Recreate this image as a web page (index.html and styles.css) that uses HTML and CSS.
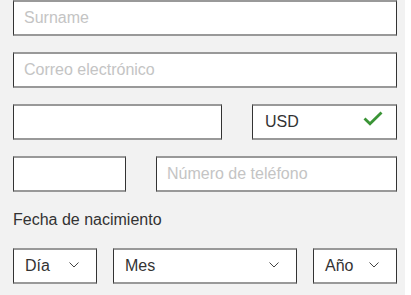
FILE: index.html
```html
<!DOCTYPE html>
<html lang="es">
<head>
<meta charset="utf-8">
<link rel="stylesheet" href="styles.css">
</head>
<body>
<div class="form">
  <div class="row"><div class="field full"><span class="ph">Surname</span></div></div>
  <div class="row"><div class="field full"><span class="ph">Correo electrónico</span></div></div>
  <div class="row gap30">
    <div class="field w209"></div>
    <div class="field grow between"><span class="val">USD</span>
      <svg class="check" width="20" height="15" viewBox="0 0 20 15"><path d="M1.5 7.5 L7 12.8 L18.5 1.5" fill="none" stroke="#3a9436" stroke-width="2.8"/></svg>
    </div>
  </div>
  <div class="row gap30">
    <div class="field w113"></div>
    <div class="field grow"><span class="ph">Número de teléfono</span></div>
  </div>
  <div class="label">Fecha de nacimiento</div>
  <div class="row gap16">
    <div class="field sel w84"><span class="val">Día</span><svg class="chev" width="10" height="6" viewBox="0 0 10 6"><path d="M0.5 0.5 L5 5 L9.5 0.5" fill="none" stroke="#444" stroke-width="1"/></svg></div>
    <div class="field sel grow"><span class="val">Mes</span><svg class="chev" width="10" height="6" viewBox="0 0 10 6"><path d="M0.5 0.5 L5 5 L9.5 0.5" fill="none" stroke="#444" stroke-width="1"/></svg></div>
    <div class="field sel w84"><span class="val">Año</span><svg class="chev" width="10" height="6" viewBox="0 0 10 6"><path d="M0.5 0.5 L5 5 L9.5 0.5" fill="none" stroke="#444" stroke-width="1"/></svg></div>
  </div>
</div>
</body>
</html>
```
FILE: styles.css
```css
html, body {
  margin: 0;
  padding: 0;
  background: #ffffff;
}
body {
  font-family: "Liberation Sans", Arial, sans-serif;
  font-size: 16px;
  color: #333;
}
.form {
  width: 405px;
  height: 295px;
  box-sizing: border-box;
  background: #f2f2f2;
  padding: 0 8px 0 13px;
  display: flex;
  flex-direction: column;
}
.row {
  display: flex;
  margin-bottom: 16px;
}
.gap30 { gap: 30px; }
.gap16 { gap: 16px; }
.field {
  box-sizing: border-box;
  height: 36px;
  background: #fff;
  border-top: 2px solid #999;
  border-bottom: 2px solid #999;
  border-left: 1px solid #333;
  border-right: 1px solid #333;
  display: flex;
  align-items: center;
  padding: 0 10px;
}
.full { width: 384px; }
.w209 { width: 209px; }
.w113 { width: 113px; }
.w84 { width: 84px; }
.grow { flex: 1; }
.between { justify-content: space-between; padding-left: 12px; padding-right: 13px; }
.ph { color: #c4c4c4; }
.val { color: #333; }
.check { margin-top: -7px; }
.sel {
  justify-content: space-between;
  padding-left: 11px;
  padding-right: 17px;
}
.chev { margin-top: -3px; }
.label {
  margin: 2px 0 18px 0;
  line-height: 20px;
  color: #333;
}
```
